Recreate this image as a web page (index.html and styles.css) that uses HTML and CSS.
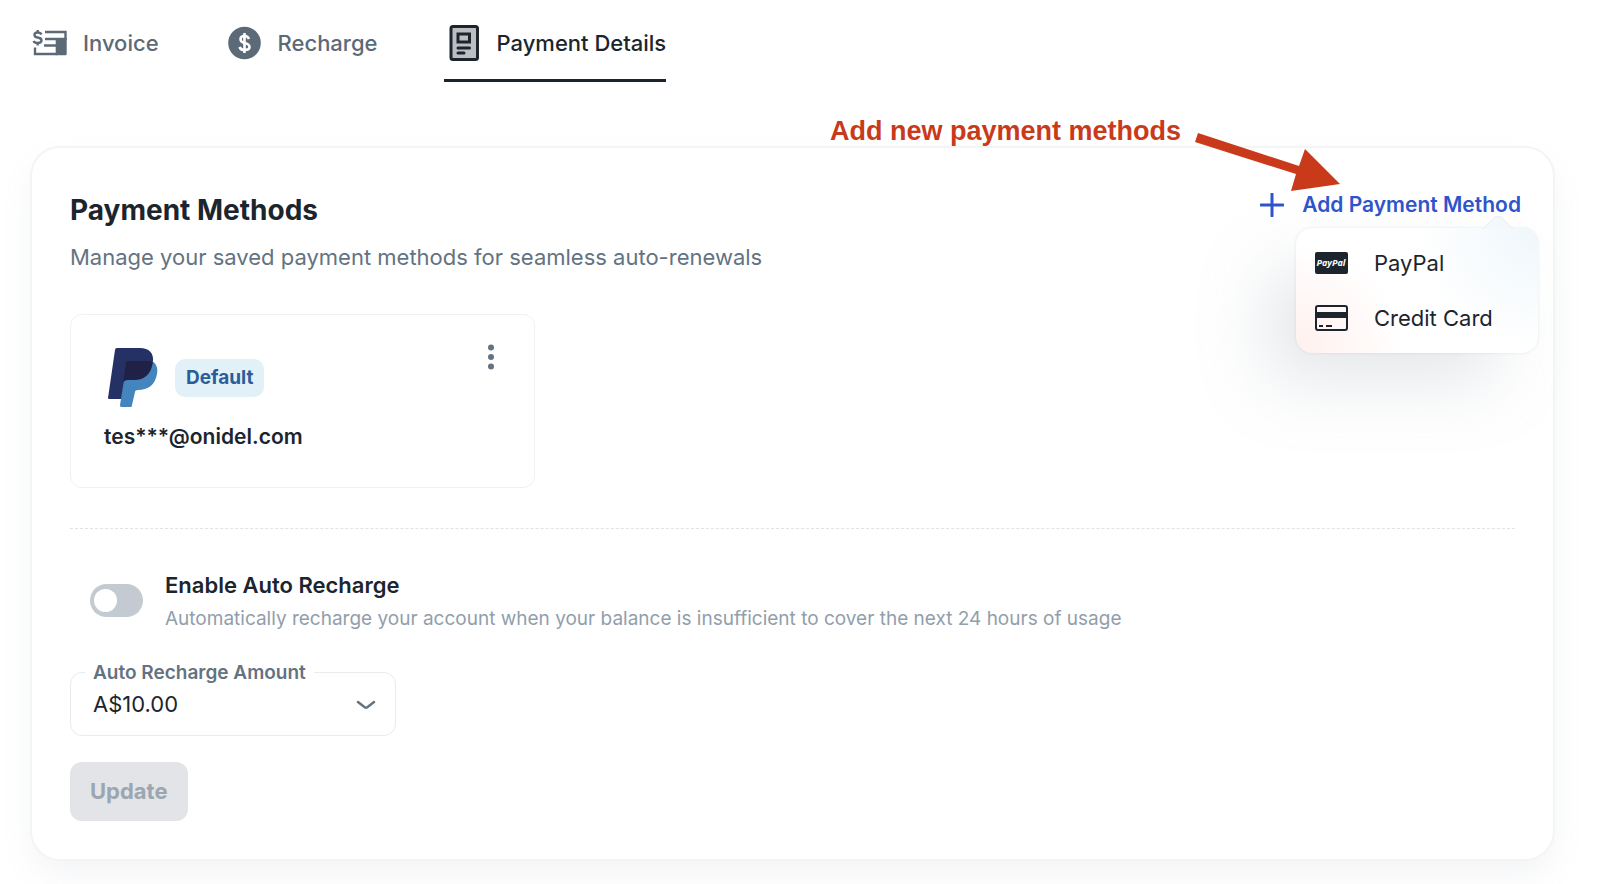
FILE: index.html
```
<!DOCTYPE html>
<html lang="en">
    <head>
        <meta charset="utf-8">
        <title>Payment Details</title>
        <link rel="stylesheet" href="styles.css">
    </head>
    <body>
        <nav class="tabs" role="tablist">
            <button type="button" class="tab" role="tab">
                <svg class="tab-icon" viewBox="0 0 40 40" fill="none" stroke="currentColor" stroke-width="2.4">
                    <path d="M15 9H35.5V16H15M14 22.5H26M5 24.5V31H27"/>
                    <path d="M25.7 15H36.7V31Q36.7 32.2 35.5 32.2H25.7Z" fill="currentColor" stroke="none"/>
                    <path d="M11.5 11.5Q10.5 9.5 7.5 9.5Q4.5 9.5 4.5 12Q4.5 14 7.5 14.5Q11.5 15 11.5 17.5Q11.5 20 7.5 20Q4.5 20 3.5 18M7.7 7V9.5M7.7 20V22.5"/>
                </svg>
                Invoice
            </button>
            <button type="button" class="tab" role="tab">
                <svg class="tab-icon" viewBox="0 0 40 40" fill="none">
                    <circle cx="19.5" cy="20" r="16.3" fill="currentColor"/>
                    <path d="M24 16Q23 13 19.5 13Q15.500 13 15.500 16.300Q15.500 19 19.500 20Q24.500 21 24.500 24Q24.500 27 19.500 27Q15.500 27 14.500 24M19.500 10V30" stroke="#fff" stroke-width="2.6"/>
                </svg>
                Recharge
            </button>
            <button type="button" class="tab tab-active" role="tab" aria-selected="true">
                <svg class="tab-icon" viewBox="0 0 40 40" fill="none" stroke="currentColor" stroke-width="3" stroke-linecap="round" stroke-linejoin="round">
                    <rect x="7" y="3.500" width="26.500" height="33" rx="2" fill="#bcbec2"/>
                    <rect x="14" y="11" width="11.500" height="8" stroke-linejoin="miter"/>
                    <path d="M14 25H25.500M14 30H20"/>
                </svg>
                Payment Details
            </button>
        </nav>

        <main class="card">
            <header class="card-header">
                <div>
                    <h1 class="title">Payment Methods</h1>
                    <p class="subtitle">Manage your saved payment methods for seamless auto-renewals</p>
                </div>
                <div class="add">
                    <button type="button" class="add-button" aria-haspopup="menu" aria-expanded="true">
                        <svg width="24" height="24" viewBox="0 0 24 24" fill="none" stroke="currentColor" stroke-width="3" stroke-linecap="round">
                            <path d="M12 1V23M1 12H23"/>
                        </svg>
                        Add Payment Method
                    </button>
                    <div class="menu" role="menu">
                        <svg class="menu-arrow" width="30" height="13" viewBox="0 0 30 13">
                            <path d="M0 13L12 1Q15 -1 18 1L30 13Z" fill="#f2f8fc"/>
                            <path d="M0 13L12 1Q15 -1 18 1L30 13" fill="none" stroke="#e8eef2"/>
                        </svg>
                        <button type="button" class="menu-item" role="menuitem">
                            <svg width="34" height="34" viewBox="0 0 34 34">
                                <rect x="1" y="6" width="33" height="22" rx="2" fill="#1c252e"/>
                                <text class="paypal-mark" x="17" y="20" text-anchor="middle">PayPal</text>
                            </svg>
                            PayPal
                        </button>
                        <button type="button" class="menu-item" role="menuitem">
                            <svg width="34" height="34" viewBox="0 0 34 34" fill="none" stroke="#1c252e" stroke-width="2">
                                <rect x="2" y="5" width="31" height="24" rx="2"/>
                                <path d="M2 14H33" stroke-width="6"/>
                                <path d="M5 25H9M12 25H18"/>
                            </svg>
                            Credit Card
                        </button>
                    </div>
                    <div class="note">
                        <span>Add new payment methods</span>
                        <svg class="note-arrow" width="146" height="60" viewBox="0 0 146 60">
                            <path d="M3 1L104 34L110 17L145 52L96 59L101 42L0 10Z" fill="#c93a1a"/>
                        </svg>
                    </div>
                </div>
            </header>

            <section class="method">
                <div class="method-top">
                    <svg width="56" height="60" viewBox="0 0 56 60">
                        <path d="M13 0H36C45 0 50 5 49 14L31 40L20 51H5Q4 51 4 50L11 2Q11 0 13 0Z" fill="#253065"/>
                        <path d="M48 13C53 16 54 21 53 26C51 37 44 42 34 42Q31 42 31 44L28 57Q28 59 27 59H17Q16 59 16 57L20 32Z" fill="#4485bd"/>
                        <path d="M24 13H45Q48 13 49 14C47 26 41 32 30 32H24Q20 32 19 35L22 15Q22 13 24 13Z" fill="#1f2146"/>
                    </svg>
                    <span class="badge">Default</span>
                    <button type="button" class="more" aria-label="More options">
                        <svg width="8" height="26" viewBox="0 0 8 26" fill="currentColor">
                            <circle cx="4" cy="3.500" r="3"/>
                            <circle cx="4" cy="13" r="3"/>
                            <circle cx="4" cy="22.500" r="3"/>
                        </svg>
                    </button>
                </div>
                <p class="email">tes***@onidel.com</p>
            </section>

            <hr class="divider">

            <div class="auto">
                <input type="checkbox" class="switch" id="auto-recharge">
                <div>
                    <label class="auto-label" for="auto-recharge">Enable Auto Recharge</label>
                    <p class="auto-help">Automatically recharge your account when your balance is insufficient to cover the next 24 hours of usage</p>
                </div>
            </div>

            <div class="field">
                <label class="field-label" for="amount">Auto Recharge Amount</label>
                <select class="field-select" id="amount">
                    <option>A$10.00</option>
                </select>
                <svg class="field-chevron" width="20" height="12" viewBox="0 0 20 12" fill="none" stroke="#637381" stroke-width="2.500" stroke-linecap="round">
                    <path d="M2 2L9 7.500Q10 8 11 7.500L18 2"/>
                </svg>
            </div>

            <button type="button" class="update" disabled>Update</button>
        </main>
    </body>
</html>
```
FILE: styles.css
```
* {
    box-sizing: border-box;
}

body {
    margin: 0;
    padding: 23px 45px 24px 30px;
    background-color: #fff;
    color: #1c252e;
    font-family: Inter, "Liberation Sans", sans-serif;
}

h1, p {
    margin: 0;
}

button {
    padding: 0;
    border: none;
    background: none;
    color: inherit;
    font-family: inherit;
}

svg {
    flex-shrink: 0;
}

.tabs {
    display: flex;
    gap: 66px;
    margin-bottom: 64px;
}

.tab {
    display: flex;
    align-items: center;
    gap: 13px;
    padding-bottom: 16px;
    border-bottom: 3px solid transparent;
    color: #5c6977;
    font-size: 22px;
    font-weight: 500;
}

.tab-active {
    border-bottom-color: #1c252e;
    color: #1c252e;
}

.tab-icon {
    width: 40px;
    height: 40px;
}

.card {
    padding: 38px;
    border: 2px solid #f3f4f6;
    border-radius: 30px;
    box-shadow: 0 16px 32px -4px rgba(145, 158, 171, 0.12);
}

.card-header {
    display: flex;
    justify-content: space-between;
    align-items: flex-start;
    margin-right: -6px;
    margin-bottom: 40px;
}

.title {
    margin-bottom: 6px;
    font-size: 28px;
    font-weight: 700;
    line-height: 48px;
}

.subtitle {
    color: #637381;
    font-size: 22px;
    line-height: 34px;
}

.add {
    position: relative;
}

.add-button {
    display: flex;
    align-items: center;
    gap: 18px;
    color: #2f55cc;
    font-size: 21px;
    font-weight: 600;
    line-height: 38px;
}

.menu {
    position: absolute;
    top: 42px;
    right: -17px;
    width: 242px;
    padding: 8px;
    border-radius: 16px;
    background:
        radial-gradient(circle at 100% 0, #eff7fb, transparent 45%),
        radial-gradient(circle at 0 100%, #fff0ee, transparent 40%),
        #fff;
    box-shadow: 0 0 3px rgba(145, 158, 171, 0.24), -35px 35px 70px -8px rgba(145, 158, 171, 0.26);
}

.menu-arrow {
    position: absolute;
    top: -12px;
    right: 25px;
}

.menu-item {
    display: flex;
    align-items: center;
    gap: 26px;
    width: 100%;
    padding: 10px;
    font-size: 22px;
    line-height: 34px;
}

.menu-item + .menu-item {
    margin-top: 1px;
}

.paypal-mark {
    fill: #fff;
    font-family: "Open Sans", sans-serif;
    font-size: 9px;
    font-style: italic;
    font-weight: 700;
}

/* callout over the card edge, pointing at the add button */
.note {
    position: absolute;
    right: 180px;
    bottom: 32px;
    display: flex;
    gap: 14px;
    color: #c93a1a;
    font-family: "Liberation Sans", Arial, sans-serif;
    font-size: 27px;
    font-weight: 700;
    line-height: 30px;
    white-space: nowrap;
}

.note-arrow {
    margin-top: 16px;
}

.method {
    width: 465px;
    max-width: 100%;
    padding: 33px;
    border: 1px solid #f0f1f3;
    border-radius: 12px;
}

.method-top {
    display: flex;
    align-items: center;
    margin-bottom: 12px;
}

.badge {
    margin-left: 15px;
    padding: 0 11px;
    border-radius: 10px;
    background-color: #e2f1f8;
    color: #2c5d98;
    font-size: 19px;
    font-weight: 700;
    line-height: 38px;
}

.more {
    align-self: flex-start;
    margin-top: -4px;
    margin-right: 6px;
    margin-left: auto;
    color: #637381;
}

.email {
    font-size: 21px;
    font-weight: 600;
    line-height: 34px;
}

.divider {
    margin: 40px 0 39px;
    border: none;
    border-top: 1px dashed #dfe3e8;
}

.auto {
    display: flex;
    align-items: flex-start;
    gap: 22px;
    margin-bottom: 36px;
    padding-left: 20px;
}

.switch {
    flex-shrink: 0;
    width: 53px;
    height: 33px;
    margin: 16px 0 0;
    padding: 5px 4px;
    border-radius: 17px;
    background-color: #c4cad1;
    appearance: none;
}

.switch::before {
    display: block;
    width: 23px;
    height: 23px;
    border-radius: 50%;
    background-color: #fff;
    content: "";
}

.switch:checked {
    background-color: #2f55cc;
}

.switch:checked::before {
    margin-left: auto;
}

.auto-label {
    display: block;
    font-size: 22px;
    font-weight: 600;
    line-height: 34px;
}

.auto-help {
    color: #919eab;
    font-size: 19px;
    line-height: 34px;
}

.field {
    position: relative;
    width: 326px;
    margin-bottom: 26px;
}

.field-label {
    position: absolute;
    top: -11px;
    left: 15px;
    padding: 0 8px;
    background-color: #fff;
    color: #637381;
    font-size: 19px;
    font-weight: 600;
    line-height: 24px;
}

.field-select {
    display: block;
    width: 100%;
    height: 64px;
    padding: 0 60px 0 22px;
    border: 1px solid #e9ebee;
    border-radius: 12px;
    background-color: #fff;
    color: #1c252e;
    font-family: inherit;
    font-size: 22px;
    appearance: none;
}

.field-chevron {
    position: absolute;
    top: 28px;
    right: 20px;
    pointer-events: none;
}

.update {
    padding: 0 20px;
    border-radius: 12px;
    background-color: #e2e4e8;
    color: #9ca6b1;
    font-size: 22px;
    font-weight: 700;
    line-height: 59px;
}
```
